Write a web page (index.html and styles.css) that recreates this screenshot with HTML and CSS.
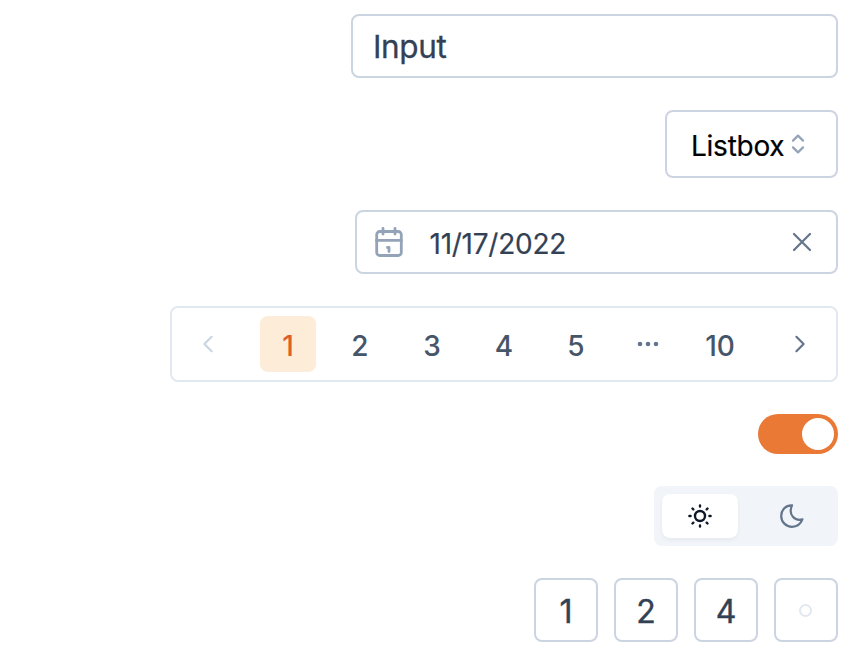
FILE: index.html
```html
<!DOCTYPE html>
<html lang="en">
<head>
<meta charset="utf-8">
<title>Form components</title>
<link rel="stylesheet" href="styles.css">
</head>
<body>
<main class="stack">
  <div class="box input"><span class="input-text">Input</span></div>
  <div class="box listbox">
    <span class="listbox-text">Listbox</span>
    <svg class="listbox-icon" width="16" height="24" viewBox="0 0 16 24"><path d="M3 8.600 8 3.600l5 5M3 15.400l5 5 5-5"/></svg>
  </div>
  <div class="box date">
    <svg class="calendar" width="32" height="32" viewBox="0 0 32 32"><rect x="3.700" y="5.500" width="24.600" height="24" rx="3"/><path d="M3.500 14.400h25M10 2.500v5.500M22 2.500v5.500M14.500 21.500h1.500v4"/></svg>
    <span class="date-text">11/17/2022</span>
    <svg class="close" width="24" height="24" viewBox="0 0 24 24"><path d="m4 4 16 16M20 4 4 20"/></svg>
  </div>
  <nav class="pagination">
    <span class="arrow arrow-off"><svg width="24" height="24" viewBox="0 0 24 24"><path d="m15.600 4.800-7.200 7.200 7.200 7.200"/></svg></span>
    <span class="page page-on">1</span>
    <span class="page">2</span>
    <span class="page">3</span>
    <span class="page">4</span>
    <span class="page">5</span>
    <span class="page"><svg class="dots" width="24" height="24" viewBox="0 0 24 24"><circle cx="4" cy="12" r="2.300"/><circle cx="12" cy="12" r="2.300"/><circle cx="20" cy="12" r="2.300"/></svg></span>
    <span class="page">10</span>
    <span class="arrow"><svg width="24" height="24" viewBox="0 0 24 24"><path d="m8.400 4.800 7.200 7.200-7.200 7.200"/></svg></span>
  </nav>
  <div class="switch"><span class="knob"></span></div>
  <div class="segments">
    <span class="segment segment-on"><svg width="28" height="28" viewBox="0 0 28 28"><circle cx="14" cy="14" r="5"/><path d="M14 3.400v1.200M14 23.400v1.200M3.400 14h1.200M23.400 14h1.200M6.500 6.500l.8.8M20.700 20.700l.8.8M6.500 21.500l.8-.8M20.700 7.300l.8-.8"/></svg></span>
    <span class="segment"><svg width="28" height="28" viewBox="0 0 28 28"><path d="M14 3.300C7.800 3 3.200 8 3.200 14c0 6 4.800 10.800 10.800 10.800 5 0 8.700-3 10.400-7.400C17 19.400 9.800 13 14 3.300Z"/></svg></span>
  </div>
  <div class="pins">
    <span class="box pin">1</span>
    <span class="box pin">2</span>
    <span class="box pin">4</span>
    <span class="box pin"><span class="placeholder"></span></span>
  </div>
</main>
</body>
</html>
```
FILE: styles.css
```css
* { box-sizing: border-box; }

body {
  margin: 0;
  background: #fff;
  color: #334155;
  font-family: Inter, "Liberation Sans", sans-serif;
}

svg {
  display: block;
  flex: none;
  fill: none;
  stroke: currentColor;
  stroke-width: 2.2;
  stroke-linecap: round;
  stroke-linejoin: round;
}

.stack {
  display: flex;
  flex-direction: column;
  align-items: flex-end;
  gap: 32px;
  padding: 14px 19px 21px 0;
}

.box {
  display: flex;
  align-items: center;
  border: 2px solid #cbd5e1;
  border-radius: 8px;
}

.input {
  width: 487px;
  height: 64px;
  padding: 1px 20px 0;
  font-size: 31.5px;
  letter-spacing: -0.35px;
  -webkit-text-stroke: 0.3px currentColor;
}

.listbox {
  width: 173px;
  height: 68px;
  padding: 0 24px;
  gap: 6px;
  color: #000;
  font-size: 28px;
  letter-spacing: -0.25px;
  -webkit-text-stroke: 0.2px currentColor;
}

.listbox-text { padding-top: 3px; }
.listbox-icon { color: #94a3b8; }

.date {
  width: 483px;
  height: 64px;
  padding: 0 22px 0 16px;
  font-size: 28px;
  letter-spacing: -0.25px;
  -webkit-text-stroke: 0.2px currentColor;
}

.calendar { color: #94a3b8; stroke-width: 2.8; }
.date-text { flex: 1; padding: 3px 0 0 24.5px; }
.close { color: #64748b; }

.pagination {
  display: flex;
  align-items: center;
  justify-content: space-between;
  width: 668px;
  height: 76px;
  padding: 0 8px;
  border: 2px solid #e2e8f0;
  border-radius: 8px;
}

.arrow,
.page {
  display: flex;
  align-items: center;
  justify-content: center;
  width: 56px;
  height: 56px;
  color: #64748b;
}

.arrow-off { color: #cbd5e1; margin-right: 8px; }
.arrow:last-child { margin-left: 8px; }

.page {
  padding-top: 3px;
  border-radius: 8px;
  color: #475569;
  font-size: 28px;
  font-weight: 500;
}

.page-on { background: #fcecd8; color: #dd6029; }
.dots { margin-top: -3px; color: #64748b; fill: currentColor; stroke: none; }

.switch {
  display: flex;
  justify-content: flex-end;
  width: 80px;
  height: 40px;
  padding: 4px;
  border-radius: 20px;
  background: #e97935;
}

.knob { width: 32px; height: 32px; border-radius: 50%; background: #fff; }

.segments {
  display: flex;
  gap: 16px;
  width: 184px;
  height: 60px;
  padding: 8px;
  border-radius: 8px;
  background: #f1f5f9;
}

.segment {
  display: flex;
  flex: 1;
  align-items: center;
  justify-content: center;
  border-radius: 8px;
  color: #64748b;
}

.segment-on {
  background: #fff;
  color: #0f172a;
  box-shadow: 0 2px 4px rgba(0, 0, 0, 0.05);
}

.segment-on svg { stroke-width: 2.4; }

.pins { display: flex; gap: 16px; }

.pin {
  justify-content: center;
  width: 64px;
  height: 64px;
  padding-top: 2px;
  font-size: 32px;
  -webkit-text-stroke: 0.4px currentColor;
}

.placeholder {
  width: 13px;
  height: 13px;
  margin: -2px 1px 0 0;
  border: 2px solid #e2e8f0;
  border-radius: 50%;
}
```
